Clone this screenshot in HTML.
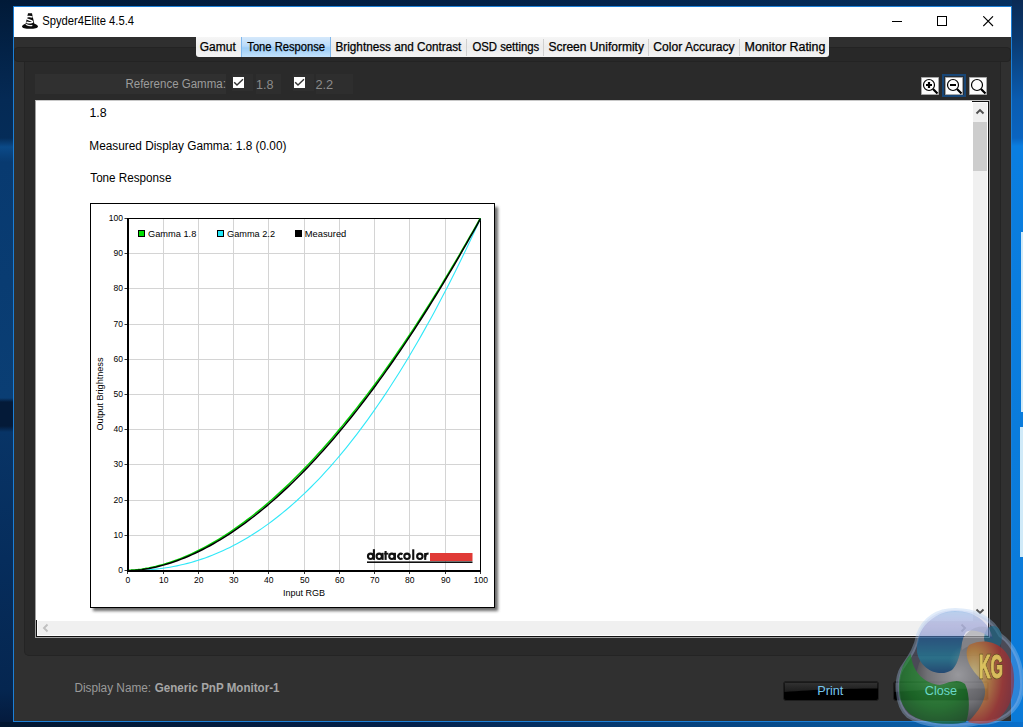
<!DOCTYPE html>
<html><head><meta charset="utf-8">
<style>
*{margin:0;padding:0;box-sizing:border-box}
html,body{width:1023px;height:727px;overflow:hidden}
body{position:relative;font-family:"Liberation Sans",sans-serif;
background:#052650;}
.a{position:absolute}
</style></head><body>
<!-- desktop -->
<div class="a" style="left:0;top:0;width:1023px;height:6px;background:linear-gradient(90deg,#011a38 0%,#022046 45%,#042a56 80%,#063060 100%)"></div>
<div class="a" style="left:0;top:0;width:13px;height:727px;background:linear-gradient(180deg,#011a38 0px,#052a55 100px,#052c58 138px,#0b4a88 147px,#083a70 162px,#0a3e74 398px,#041a38 402px,#041a38 426px,#083466 432px,#062d5c 560px,#052650 690px,#04193a 727px)"></div>
<div class="a" style="left:1012px;top:0;width:11px;height:727px;background:linear-gradient(180deg,#0a2a55 0px,#0a3a70 40px,#0a5cb0 100px,#0a64c0 138px,#0a7ee0 146px,#0a7ad8 727px)"></div>
<div class="a" style="left:0;top:722px;width:1023px;height:5px;background:linear-gradient(90deg,#011630 0%,#03204a 40%,#053e78 65%,#0a5aa0 88%,#0a70cc 100%)"></div>
<div class="a" style="left:1021px;top:232px;width:2px;height:180px;background:#d0eaf8"></div>
<div class="a" style="left:1020px;top:427px;width:3px;height:130px;background:#d0eaf8"></div>
<!-- window -->
<div class="a" style="left:13px;top:6px;width:999px;height:716px;border:1px solid #1c7fd6;background:#2f2f2f"></div>
<div class="a" style="left:14px;top:7px;width:997px;height:30px;background:#fff"></div>
<svg class="a" style="left:18px;top:10px" width="24" height="22" viewBox="0 0 24 22">
<path d="M10 3.2h4l0.6 3l1.8 7.5c2 .6 3.6 1.6 3.6 2.8c0 1.6-3.5 2.3-8 2.3s-8-.7-8-2.3c0-1.2 1.6-2.2 3.6-2.8l1.8-7.5z" fill="#0a0a0a"/>
<path d="M14.5 7.2c-2-1-6.5-1-6.3 1.0c.2 1.6 6 1.8 6.4 3.4c.3 1.2-3.4 1.4-6.2 0.6" fill="none" stroke="#fff" stroke-width="1.5"/>
<path d="M7.8 14.2c2 1.2 5.5 1.5 6.5 1.2" fill="none" stroke="#f0f0f0" stroke-width="1.3"/>
</svg>
<div class="a" style="left:892px;top:21px;width:10px;height:1px;background:#000"></div>
<div class="a" style="left:937px;top:16px;width:10px;height:10px;border:1px solid #000"></div>
<svg class="a" style="left:983px;top:16px" width="11" height="11"><path d="M.3 .3L10 10M10 .3L.3 10" stroke="#000" stroke-width="1.1"/></svg>

<!-- tab strip bar -->
<div class="a" style="left:14px;top:61px;width:997px;height:660px;background:#303030"></div>
<div class="a" style="left:24px;top:61px;width:977px;height:595px;background:#2a2a2a;border-left:1px solid #242424;border-right:1px solid #242424;border-bottom:1px solid #242424;border-radius:0 0 5px 5px"></div>
<div class="a" style="left:14px;top:47px;width:997px;height:15px;background:#282828;border:1px solid #232323;border-radius:4px"></div>
<!-- tabs -->
<div class="a" style="left:196px;top:37px;width:633px;height:20px;background:linear-gradient(180deg,#f6f6f6 0%,#ececec 50%,#f4f4f4 100%);border-radius:0 0 3px 3px"></div>
<div class="a" style="left:241px;top:37px;width:90px;height:20px;background:linear-gradient(180deg,#d6e9fb 0%,#b8daf9 45%,#9ccdf6 55%,#c4e2fb 100%);border-left:1px solid #7fb7ec;border-right:1px solid #7fb7ec"></div>
<div class="a" style="left:466px;top:39px;width:1px;height:17px;background:#d0d0d0"></div>
<div class="a" style="left:543px;top:39px;width:1px;height:17px;background:#d0d0d0"></div>
<div class="a" style="left:648px;top:39px;width:1px;height:17px;background:#d0d0d0"></div>
<div class="a" style="left:739px;top:39px;width:1px;height:17px;background:#d0d0d0"></div>

<!-- reference gamma bar -->
<div class="a" style="left:35px;top:74px;width:191px;height:20px;background:#303030"></div>
<div class="a" style="left:232px;top:74px;width:21px;height:17px;background:#2e2e2e"></div>
<div class="a" style="left:256px;top:74px;width:25px;height:20px;background:#2e2e2e"></div>
<div class="a" style="left:293px;top:74px;width:21px;height:17px;background:#2e2e2e"></div>
<div class="a" style="left:316px;top:74px;width:37px;height:20px;background:#2e2e2e"></div>
<svg class="a" style="left:233px;top:77px" width="11" height="11"><rect width="11" height="11" fill="#fff"/><path d="M1.2 5.2L4 8.1L10 2.2" fill="none" stroke="#333" stroke-width="1.4"/></svg>
<svg class="a" style="left:294px;top:77px" width="11" height="11"><rect width="11" height="11" fill="#fff"/><path d="M1.2 5.2L4 8.1L10 2.2" fill="none" stroke="#333" stroke-width="1.4"/></svg>

<!-- zoom icons -->
<div class="a" style="left:942px;top:74px;width:24px;height:23px;border:2px solid #184676;background:#252d36"></div>
<svg class="a" style="left:921px;top:77px" width="66" height="18">
<g fill="#fdfdfd" stroke="#9a9a9a" stroke-width="0.6"><rect x="0.3" y="0.3" width="17.4" height="17.4"/><rect x="24.3" y="0.3" width="17.4" height="17.4"/><rect x="48.3" y="0.3" width="17.4" height="17.4"/></g>
<g fill="none" stroke="#000" stroke-width="1.2"><circle cx="8" cy="8" r="5.5"/><circle cx="32" cy="8" r="5.5"/><circle cx="56" cy="8" r="5.5"/></g>
<g stroke="#000" stroke-width="2.2"><path d="M12 12l4.5 4.5M36 12l4.5 4.5M60 12l4.5 4.5"/><path d="M5 8h6M8 5v6M29 8h6"/></g>
</svg>

<!-- content -->
<div class="a" style="left:35px;top:100px;width:955px;height:538px;background:#fff;border:1px solid #a0a0a0;border-top-color:#c8c8c8"></div>
<svg width="1023" height="727" style="position:absolute;left:0;top:0" font-family="Liberation Sans">
<defs><filter id="sh" x="-5%" y="-5%" width="115%" height="115%"><feGaussianBlur stdDeviation="1.8"/></filter></defs>
<rect x="93" y="207" width="405" height="404" fill="#6a6a6a" filter="url(#sh)"/>
<rect x="90.5" y="203.5" width="404" height="404" fill="#fff" stroke="#000" stroke-width="1"/>
<g stroke="#d4d4d4" stroke-width="1"><line x1="163.5" y1="219" x2="163.5" y2="570" /><line x1="129" y1="535.5" x2="480" y2="535.5" /><line x1="198.5" y1="219" x2="198.5" y2="570" /><line x1="129" y1="500.5" x2="480" y2="500.5" /><line x1="233.5" y1="219" x2="233.5" y2="570" /><line x1="129" y1="464.5" x2="480" y2="464.5" /><line x1="268.5" y1="219" x2="268.5" y2="570" /><line x1="129" y1="429.5" x2="480" y2="429.5" /><line x1="304.5" y1="219" x2="304.5" y2="570" /><line x1="129" y1="394.5" x2="480" y2="394.5" /><line x1="339.5" y1="219" x2="339.5" y2="570" /><line x1="129" y1="359.5" x2="480" y2="359.5" /><line x1="374.5" y1="219" x2="374.5" y2="570" /><line x1="129" y1="324.5" x2="480" y2="324.5" /><line x1="409.5" y1="219" x2="409.5" y2="570" /><line x1="129" y1="288.5" x2="480" y2="288.5" /><line x1="445.5" y1="219" x2="445.5" y2="570" /><line x1="129" y1="253.5" x2="480" y2="253.5" /></g>
<rect x="127.5" y="218.5" width="353" height="352" fill="none" stroke="#000" stroke-width="1"/>
<polyline points="127.50,570.50 131.03,570.49 134.56,570.44 138.09,570.34 141.62,570.20 145.15,570.02 148.68,569.78 152.21,569.49 155.74,569.14 159.27,568.74 162.80,568.28 166.33,567.76 169.86,567.18 173.39,566.54 176.92,565.84 180.45,565.08 183.98,564.25 187.51,563.36 191.04,562.41 194.57,561.38 198.10,560.30 201.63,559.14 205.16,557.91 208.69,556.62 212.22,555.26 215.75,553.83 219.28,552.32 222.81,550.75 226.34,549.11 229.87,547.39 233.40,545.60 236.93,543.74 240.46,541.80 243.99,539.79 247.52,537.71 251.05,535.55 254.58,533.31 258.11,531.00 261.64,528.61 265.17,526.15 268.70,523.61 272.23,520.99 275.76,518.30 279.29,515.52 282.82,512.67 286.35,509.74 289.88,506.73 293.41,503.64 296.94,500.47 300.47,497.22 304.00,493.89 307.53,490.48 311.06,486.99 314.59,483.41 318.12,479.76 321.65,476.02 325.18,472.20 328.71,468.30 332.24,464.31 335.77,460.24 339.30,456.09 342.83,451.85 346.36,447.53 349.89,443.12 353.42,438.63 356.95,434.06 360.48,429.40 364.01,424.65 367.54,419.82 371.07,414.90 374.60,409.90 378.13,404.80 381.66,399.63 385.19,394.36 388.72,389.01 392.25,383.57 395.78,378.04 399.31,372.43 402.84,366.73 406.37,360.93 409.90,355.05 413.43,349.08 416.96,343.03 420.49,336.88 424.02,330.64 427.55,324.31 431.08,317.90 434.61,311.39 438.14,304.79 441.67,298.10 445.20,291.33 448.73,284.46 452.26,277.49 455.79,270.44 459.32,263.30 462.85,256.06 466.38,248.73 469.91,241.31 473.44,233.80 476.97,226.20 480.50,218.50" fill="none" stroke="#30e8f8" stroke-width="1.1"/>
<polyline points="127.30,570.20 130.83,570.11 134.36,569.89 137.89,569.56 141.42,569.13 144.95,568.60 148.48,567.98 152.01,567.26 155.54,566.47 159.07,565.58 162.60,564.62 166.13,563.58 169.66,562.45 173.19,561.25 176.72,559.98 180.25,558.63 183.78,557.20 187.31,555.70 190.84,554.13 194.37,552.49 197.90,550.77 201.43,548.99 204.96,547.14 208.49,545.22 212.02,543.23 215.55,541.17 219.08,539.05 222.61,536.86 226.14,534.60 229.67,532.28 233.20,529.89 236.73,527.44 240.26,524.93 243.79,522.35 247.32,519.71 250.85,517.01 254.38,514.24 257.91,511.41 261.44,508.52 264.97,505.57 268.50,502.55 272.03,499.48 275.56,496.34 279.09,493.15 282.62,489.89 286.15,486.58 289.68,483.20 293.21,479.77 296.74,476.28 300.27,472.72 303.80,469.11 307.33,465.45 310.86,461.72 314.39,457.94 317.92,454.09 321.45,450.20 324.98,446.24 328.51,442.23 332.04,438.16 335.57,434.03 339.10,429.85 342.63,425.61 346.16,421.32 349.69,416.97 353.22,412.56 356.75,408.10 360.28,403.58 363.81,399.01 367.34,394.38 370.87,389.70 374.40,384.97 377.93,380.18 381.46,375.33 384.99,370.43 388.52,365.48 392.05,360.47 395.58,355.41 399.11,350.30 402.64,345.13 406.17,339.91 409.70,334.64 413.23,329.31 416.76,323.93 420.29,318.50 423.82,313.02 427.35,307.48 430.88,301.89 434.41,296.25 437.94,290.55 441.47,284.81 445.00,279.01 448.53,273.16 452.06,267.26 455.59,261.30 459.12,255.30 462.65,249.24 466.18,243.14 469.71,236.98 473.24,230.77 476.77,224.51 480.30,218.20" fill="none" stroke="#00d000" stroke-width="1.5"/>
<polyline points="127.50,570.70 131.10,570.61 134.70,570.39 138.29,570.06 141.89,569.63 145.48,569.10 149.07,568.48 152.66,567.76 156.24,566.97 159.83,566.08 163.41,565.12 166.99,564.08 170.57,562.95 174.15,561.75 177.73,560.48 181.30,559.13 184.87,557.70 188.44,556.20 192.01,554.63 195.58,552.99 199.15,551.27 202.71,549.49 206.27,547.64 209.84,545.72 213.40,543.73 216.95,541.67 220.51,539.55 224.07,537.36 227.62,535.10 231.17,532.78 234.72,530.39 238.27,527.94 241.82,525.43 245.36,522.85 248.91,520.21 252.45,517.51 255.99,514.74 259.53,511.91 263.07,509.02 266.61,506.07 270.14,503.05 273.68,499.98 277.21,496.84 280.74,493.65 284.27,490.39 287.80,487.08 291.33,483.70 294.85,480.27 298.38,476.78 301.90,473.22 305.42,469.61 308.94,465.95 312.46,462.22 315.98,458.44 319.50,454.59 323.01,450.70 326.53,446.74 330.04,442.73 333.55,438.66 337.07,434.53 340.58,430.35 344.09,426.11 347.59,421.82 351.10,417.47 354.61,413.06 358.11,408.60 361.62,404.08 365.12,399.51 368.62,394.88 372.12,390.20 375.62,385.47 379.12,380.68 382.62,375.83 386.12,370.93 389.62,365.98 393.12,360.97 396.61,355.91 400.11,350.80 403.60,345.63 407.10,340.41 410.59,335.14 414.08,329.81 417.58,324.43 421.07,319.00 424.56,313.52 428.06,307.98 431.55,302.39 435.04,296.75 438.53,291.05 442.02,285.31 445.52,279.51 449.01,273.66 452.50,267.76 456.00,261.80 459.49,255.80 462.99,249.74 466.48,243.64 469.98,237.48 473.48,231.27 476.99,225.01 480.50,218.70" fill="none" stroke="#000" stroke-width="1.5"/>
<rect x="127" y="218" width="2" height="353" fill="#000"/>
<rect x="127" y="570" width="354" height="2" fill="#000"/>
<g stroke="#333" stroke-width="1"><line x1="124.5" y1="570.5" x2="127" y2="570.5"/><line x1="127.5" y1="572" x2="127.5" y2="574"/><line x1="124.5" y1="535.5" x2="127" y2="535.5"/><line x1="163.5" y1="572" x2="163.5" y2="574"/><line x1="124.5" y1="500.5" x2="127" y2="500.5"/><line x1="198.5" y1="572" x2="198.5" y2="574"/><line x1="124.5" y1="464.5" x2="127" y2="464.5"/><line x1="233.5" y1="572" x2="233.5" y2="574"/><line x1="124.5" y1="429.5" x2="127" y2="429.5"/><line x1="268.5" y1="572" x2="268.5" y2="574"/><line x1="124.5" y1="394.5" x2="127" y2="394.5"/><line x1="304.5" y1="572" x2="304.5" y2="574"/><line x1="124.5" y1="359.5" x2="127" y2="359.5"/><line x1="339.5" y1="572" x2="339.5" y2="574"/><line x1="124.5" y1="324.5" x2="127" y2="324.5"/><line x1="374.5" y1="572" x2="374.5" y2="574"/><line x1="124.5" y1="288.5" x2="127" y2="288.5"/><line x1="409.5" y1="572" x2="409.5" y2="574"/><line x1="124.5" y1="253.5" x2="127" y2="253.5"/><line x1="445.5" y1="572" x2="445.5" y2="574"/><line x1="124.5" y1="218.5" x2="127" y2="218.5"/><line x1="480.5" y1="572" x2="480.5" y2="574"/></g>
<g font-size="8.5" fill="#000"><text x="123" y="573" text-anchor="end">0</text><text x="127.8" y="583" text-anchor="middle">0</text><text x="123" y="538" text-anchor="end">10</text><text x="163.8" y="583" text-anchor="middle">10</text><text x="123" y="503" text-anchor="end">20</text><text x="198.8" y="583" text-anchor="middle">20</text><text x="123" y="467" text-anchor="end">30</text><text x="233.8" y="583" text-anchor="middle">30</text><text x="123" y="432" text-anchor="end">40</text><text x="268.8" y="583" text-anchor="middle">40</text><text x="123" y="397" text-anchor="end">50</text><text x="304.8" y="583" text-anchor="middle">50</text><text x="123" y="362" text-anchor="end">60</text><text x="339.8" y="583" text-anchor="middle">60</text><text x="123" y="327" text-anchor="end">70</text><text x="374.8" y="583" text-anchor="middle">70</text><text x="123" y="291" text-anchor="end">80</text><text x="409.8" y="583" text-anchor="middle">80</text><text x="123" y="256" text-anchor="end">90</text><text x="445.8" y="583" text-anchor="middle">90</text><text x="123" y="221" text-anchor="end">100</text><text x="480.8" y="583" text-anchor="middle">100</text></g>
<text transform="translate(103,394) rotate(-90)" text-anchor="middle" font-size="9" textLength="73" lengthAdjust="spacingAndGlyphs">Output Brightness</text>
<rect x="138.5" y="230.5" width="6" height="6" fill="#00e000" stroke="#000"/>
<rect x="217.5" y="230.5" width="6" height="6" fill="#20e8f8" stroke="#000"/>
<rect x="295.5" y="230.5" width="6" height="6" fill="#000" stroke="#000"/>
<g fill="none" stroke="#111" stroke-width="2.1">
<circle cx="370.6" cy="556.3" r="2.65"/><path d="M373.9,549.2V559.9"/>
<circle cx="379.2" cy="556.3" r="2.65"/><path d="M382.6,552.8V559.9"/>
<path d="M385.6,551V559.9"/><path d="M384.2,553.7H388.4" stroke-width="1.8"/>
<circle cx="391.9" cy="556.3" r="2.65"/><path d="M394.9,552.8V559.9"/>
<path d="M402.5,554.4A2.55,2.55 0 1 0 402.5,558.2"/>
<circle cx="407.0" cy="556.3" r="2.7"/>
<path d="M413.25,549.3V559.9"/>
<circle cx="419.85" cy="556.3" r="2.7"/>
<path d="M425.2,559.9V553"/><path d="M425.2,557C425.2,554.6 426.6,553.6 428.6,553.6" stroke-width="2"/>
</g>
<rect x="430" y="553" width="42.5" height="8" fill="#e03a36"/>
<rect x="367" y="561.4" width="105.5" height="1.6" fill="#111"/>
</svg>
<!-- scrollbars -->
<div class="a" style="left:36px;top:620px;width:1px;height:17px;background:#111"></div>
<div class="a" style="left:36px;top:636px;width:953px;height:1px;background:#111"></div>
<div class="a" style="left:988px;top:101px;width:1px;height:536px;background:#111"></div>
<div class="a" style="left:972px;top:101px;width:17px;height:1px;background:#111"></div>
<div class="a" style="left:37px;top:621px;width:951px;height:15px;background:#fff"></div>
<div class="a" style="left:972px;top:102px;width:16px;height:534px;background:#fff"></div>
<div class="a" style="left:973px;top:103px;width:14px;height:532px;background:#f0f0f0"></div>
<div class="a" style="left:38px;top:621px;width:949px;height:14px;background:#f0f0f0"></div>
<div class="a" style="left:973px;top:122px;width:14px;height:49px;background:#cdcdcd"></div>
<svg class="a" style="left:975px;top:107px" width="10" height="8"><path d="M1.5 6.5l3.5-3.5l3.5 3.5" fill="none" stroke="#505050" stroke-width="1.9"/></svg>
<svg class="a" style="left:975px;top:608px" width="10" height="8"><path d="M1.5 1.5l3.5 3.5l3.5-3.5" fill="none" stroke="#505050" stroke-width="1.9"/></svg>
<svg class="a" style="left:41px;top:623px" width="8" height="10"><path d="M6.5 1.5l-3.5 3.5l3.5 3.5" fill="none" stroke="#c0c0c0" stroke-width="1.9"/></svg>
<svg class="a" style="left:960px;top:623px" width="8" height="10"><path d="M1.5 1.5l3.5 3.5l-3.5 3.5" fill="none" stroke="#c0c0c0" stroke-width="1.9"/></svg>

<!-- bottom buttons -->
<svg class="a" style="left:0;top:0" width="1023" height="727">
<defs><linearGradient id="bg1" x1="0" y1="0" x2="0" y2="1"><stop offset="0" stop-color="#323232"/><stop offset="1" stop-color="#1c1c1c"/></linearGradient></defs>
<g transform="translate(783,681)"><rect x=".5" y=".5" width="95" height="19" rx="2.5" fill="#000" stroke="#1e1e1e"/><path d="M1.5,1.5 H94.5 V7.5 C70,7.5 30,8.5 1.5,11 Z" fill="url(#bg1)"/></g>
<g transform="translate(893,681)"><rect x=".5" y=".5" width="95" height="19" rx="2.5" fill="#000" stroke="#1e1e1e"/><path d="M1.5,1.5 H94.5 V7.5 C70,7.5 30,8.5 1.5,11 Z" fill="url(#bg1)"/></g>
</svg>

<svg width="1023" height="727" style="position:absolute;left:0;top:0" font-family="Liberation Sans"><text x="42.26" y="25.40" font-size="12" font-weight="normal" fill="#000" textLength="91.79" lengthAdjust="spacingAndGlyphs">Spyder4Elite 4.5.4</text><text x="199.80" y="50.60" font-size="12" font-weight="normal" fill="#000" stroke="#000" stroke-width="0.25" textLength="35.91" lengthAdjust="spacingAndGlyphs">Gamut</text><text x="247.30" y="50.60" font-size="12" font-weight="normal" fill="#000" stroke="#000" stroke-width="0.25" textLength="77.66" lengthAdjust="spacingAndGlyphs">Tone Response</text><text x="335.52" y="50.60" font-size="12" font-weight="normal" fill="#000" stroke="#000" stroke-width="0.25" textLength="125.83" lengthAdjust="spacingAndGlyphs">Brightness and Contrast</text><text x="472.40" y="50.60" font-size="12" font-weight="normal" fill="#000" stroke="#000" stroke-width="0.25" textLength="66.86" lengthAdjust="spacingAndGlyphs">OSD settings</text><text x="548.40" y="50.60" font-size="12" font-weight="normal" fill="#000" stroke="#000" stroke-width="0.25" textLength="95.58" lengthAdjust="spacingAndGlyphs">Screen Uniformity</text><text x="653.39" y="50.60" font-size="12" font-weight="normal" fill="#000" stroke="#000" stroke-width="0.25" textLength="81.21" lengthAdjust="spacingAndGlyphs">Color Accuracy</text><text x="744.56" y="50.60" font-size="12" font-weight="normal" fill="#000" stroke="#000" stroke-width="0.25" textLength="80.92" lengthAdjust="spacingAndGlyphs">Monitor Rating</text><text x="125.44" y="87.80" font-size="12" font-weight="normal" fill="#9c9c9c" textLength="100.45" lengthAdjust="spacingAndGlyphs">Reference Gamma:</text><text x="255.95" y="88.50" font-size="12" font-weight="normal" fill="#8c8c8c" textLength="17.47" lengthAdjust="spacingAndGlyphs">1.8</text><text x="315.43" y="88.50" font-size="12" font-weight="normal" fill="#8c8c8c" textLength="17.80" lengthAdjust="spacingAndGlyphs">2.2</text><text x="74.42" y="691.70" font-size="12" font-weight="normal" fill="#9a9a9a" textLength="76.70" lengthAdjust="spacingAndGlyphs">Display Name:</text><text x="154.80" y="691.70" font-size="12" font-weight="bold" fill="#a6a6a6" textLength="124.64" lengthAdjust="spacingAndGlyphs">Generic PnP Monitor-1</text><text x="817.24" y="694.80" font-size="12" font-weight="normal" fill="#76c6ee" textLength="26.13" lengthAdjust="spacingAndGlyphs">Print</text><text x="89.47" y="117.20" font-size="12" font-weight="normal" fill="#000" textLength="17.24" lengthAdjust="spacingAndGlyphs">1.8</text><text x="89.31" y="149.90" font-size="12" font-weight="normal" fill="#000" textLength="197.16" lengthAdjust="spacingAndGlyphs">Measured Display Gamma: 1.8 (0.00)</text><text x="90.30" y="181.70" font-size="12" font-weight="normal" fill="#000" textLength="81.08" lengthAdjust="spacingAndGlyphs">Tone Response</text><text x="283.00" y="596.00" font-size="9" font-weight="normal" fill="#000" textLength="42.13" lengthAdjust="spacingAndGlyphs">Input RGB</text><text x="148.00" y="236.60" font-size="9" font-weight="normal" fill="#000" textLength="48.33" lengthAdjust="spacingAndGlyphs">Gamma 1.8</text><text x="227.10" y="236.60" font-size="9" font-weight="normal" fill="#000" textLength="47.93" lengthAdjust="spacingAndGlyphs">Gamma 2.2</text><text x="304.76" y="236.60" font-size="9" font-weight="normal" fill="#000" textLength="41.57" lengthAdjust="spacingAndGlyphs">Measured</text></svg>
<svg class="a" style="left:0;top:0" width="1023" height="727">
<defs>
<radialGradient id="gGrey" cx="0.5" cy="0.45" r="0.6"><stop offset="0" stop-color="#c8c8c8"/><stop offset="0.6" stop-color="#8a8a8a"/><stop offset="1" stop-color="#3a3a3a"/></radialGradient>
<linearGradient id="gBlue" gradientUnits="userSpaceOnUse" x1="0" y1="611" x2="0" y2="678"><stop offset="0" stop-color="#80b0e0" stop-opacity="0.75"/><stop offset="0.2" stop-color="#8890d0" stop-opacity="0.7"/><stop offset="0.36" stop-color="#7888c8" stop-opacity="0.75"/><stop offset="0.39" stop-color="#1a5a98"/><stop offset="0.7" stop-color="#1a88a8"/><stop offset="1" stop-color="#0a3478"/></linearGradient>
<radialGradient id="gBlueH" cx="0.72" cy="0.82" r="0.3"><stop offset="0" stop-color="#e0b0a8" stop-opacity="0.9"/><stop offset="1" stop-color="#40b0c0" stop-opacity="0"/></radialGradient>
<radialGradient id="gGreen" cx="0.55" cy="0.3" r="0.9"><stop offset="0" stop-color="#38b040"/><stop offset="0.5" stop-color="#168a20"/><stop offset="1" stop-color="#084010"/></radialGradient>
<radialGradient id="gRed" cx="0.15" cy="0.4" r="0.95"><stop offset="0" stop-color="#fff0a0"/><stop offset="0.3" stop-color="#e8a040"/><stop offset="0.65" stop-color="#c03028"/><stop offset="1" stop-color="#882438"/></radialGradient>
</defs>
<path d="M955,610 C975,610 992,618 1000,635 C1015,645 1023,665 1022,688 C1020,712 1000,724 978,723 C955,728 925,727 908,716 C895,705 896,678 902,668 C910,656 916,648 918,635 C924,618 938,610 955,610 Z" fill="#a8a8e0" fill-opacity="0.22" stroke="#a8c8f0" stroke-width="4" stroke-opacity="0.35"/>
<g opacity="0.62">
<circle cx="958" cy="679" r="42" fill="url(#gGrey)"/>
<path d="M962,640 C970,626 984,622 994,632 C998,640 996,648 990,652 C982,646 972,642 962,650 Z" fill="#a8a8a8"/>
<ellipse cx="993" cy="638" rx="9" ry="12" fill="#1a6a88"/>
<path d="M917,652 C915,628 935,611 955,611 C975,611 990,622 993,640 C985,632 972,628 966,632 C960,640 962,660 952,670 C940,678 920,670 917,652 Z" fill="url(#gBlue)"/>
<path d="M917,652 C915,628 935,611 955,611 C975,611 990,622 993,640 C985,632 972,628 966,632 C960,640 962,660 952,670 C940,678 920,670 917,652 Z" fill="url(#gBlueH)"/>
<path d="M899,690 C898,672 905,660 911,654 C912,672 925,684 940,685 C950,682 958,678 965,684 C970,694 970,712 966,722 C950,726 920,724 908,712 C901,704 899,697 899,690 Z" fill="url(#gGreen)"/>
<path d="M969,645 C988,636 1008,645 1013,668 C1017,690 1010,712 995,721 C985,725 975,724 968,722 C985,705 990,690 980,678 C969,668 963,654 969,645 Z" fill="url(#gRed)"/>
</g>
<g font-family="Liberation Sans" font-weight="bold" font-size="33" opacity="0.9"><text x="979" y="678" fill="#5a4a20" stroke="#5a4a20" stroke-width="2.6" textLength="24" lengthAdjust="spacingAndGlyphs">KG</text><text x="979" y="678" fill="#e0c860" stroke="#e0c860" stroke-width="1" textLength="24" lengthAdjust="spacingAndGlyphs">KG</text></g>
</svg>
<svg width="1023" height="727" style="position:absolute;left:0;top:0" font-family="Liberation Sans"><text x="924.74" y="695.00" font-size="12" font-weight="normal" fill="#6ad8c8" textLength="32.38" lengthAdjust="spacingAndGlyphs">Close</text></svg>
</body></html>
